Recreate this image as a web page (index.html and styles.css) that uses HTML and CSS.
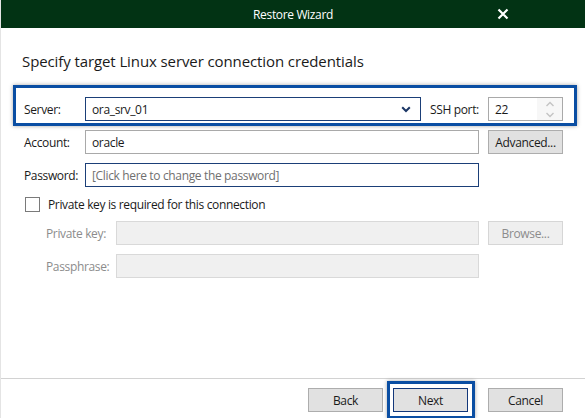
FILE: index.html
```html
<!DOCTYPE html>
<html>
<head>
<meta charset="utf-8">
<link rel="stylesheet" href="styles.css">
</head>
<body>
<div class="window">
  <div class="titlebar">
    <span class="title">Restore Wizard</span>
    <span class="close">
      <svg width="12" height="12" viewBox="0 0 12 12"><path d="M1.5 1.5 L10.5 10.5 M10.5 1.5 L1.5 10.5" stroke="#fff" stroke-width="2.2" fill="none"/></svg>
    </span>
  </div>
  <div class="main">
    <h1 class="heading">Specify target Linux server connection credentials</h1>
    <div class="form">
      <div class="row server-row">
        <span class="mark"></span>
        <span class="label">Server:</span>
        <div class="field combo focus">
          <span class="value">ora_srv_01</span>
          <svg class="chev" width="10" height="7" viewBox="0 0 10 7"><path d="M1.2 1.2 L5 5 L8.8 1.2" stroke="#1c3766" stroke-width="2" fill="none"/></svg>
        </div>
        <span class="label ssh">SSH port:</span>
        <div class="field spin">
          <span class="value">22</span>
          <div class="spin-btns">
            <svg width="10" height="6" viewBox="0 0 10 6"><path d="M1.5 5 L5 1.5 L8.5 5" stroke="#c4c4c4" stroke-width="1.4" fill="none"/></svg>
            <svg width="10" height="6" viewBox="0 0 10 6"><path d="M1.5 1 L5 4.5 L8.5 1" stroke="#c4c4c4" stroke-width="1.4" fill="none"/></svg>
          </div>
        </div>
      </div>
      <div class="row">
        <span class="label">Account:</span>
        <div class="field wide"><span class="value">oracle</span></div>
        <button class="btn side">Advanced...</button>
      </div>
      <div class="row">
        <span class="label">Password:</span>
        <div class="field wide focus"><span class="value placeholder">[Click here to change the password]</span></div>
      </div>
      <div class="row check-row">
        <span class="checkbox"></span>
        <span class="check-label">Private key is required for this connection</span>
      </div>
      <div class="row">
        <span class="label sub disabled">Private key:</span>
        <div class="field narrow off"></div>
        <button class="btn side off">Browse...</button>
      </div>
      <div class="row">
        <span class="label sub disabled">Passphrase:</span>
        <div class="field narrow off"></div>
      </div>
    </div>
  </div>
  <div class="footer">
    <button class="btn">Back</button>
    <div class="next-wrap">
      <span class="mark"></span>
      <button class="btn default">Next</button>
    </div>
    <button class="btn cancel">Cancel</button>
  </div>
</div>
</body>
</html>
```
FILE: styles.css
```css
* { box-sizing: border-box; }
html, body { margin: 0; padding: 0; }
body {
  width: 585px;
  height: 418px;
  overflow: hidden;
  background: #ffffff;
  font-family: "Open Sans", "Noto Sans", sans-serif;
  font-size: 12px;
  letter-spacing: -0.35px;
  color: #1a1a1a;
}
.window {
  width: 585px;
  height: 418px;
  display: flex;
  flex-direction: column;
  border-left: 1px solid #e4e4e4;
}
.titlebar {
  height: 28px;
  flex: none;
  background: #023314;
  color: #ffffff;
  display: flex;
  align-items: center;
  justify-content: center;
  position: relative;
}
.title { font-size: 12px; }
.close {
  position: absolute;
  right: 76px;
  top: 8px;
  width: 12px;
  height: 12px;
  display: flex;
}
.main {
  flex: 1;
  padding: 23px 22px 0 23px;
}
.heading {
  margin: 0 0 26px -2px;
  font-size: 15px;
  font-weight: normal;
  letter-spacing: -0.1px;
  line-height: 20px;
  color: #1a1a1a;
}
.form {
  display: flex;
  flex-direction: column;
  gap: 9px;
}
.row {
  display: flex;
  align-items: center;
  height: 24px;
  position: relative;
}
.mark {
  position: absolute;
  border: 3px solid #0a4ea3;
  box-shadow: 0 0 4px rgba(0, 0, 0, 0.35);
  pointer-events: none;
}
.server-row .mark {
  left: -11px;
  right: -14px;
  top: -12px;
  bottom: -5px;
}
.label {
  width: 61px;
  flex: none;
}
.label.sub {
  margin-left: 22px;
  width: 70px;
}
.disabled { color: #8c8c8c; }
.field {
  height: 24px;
  border: 1px solid #a9a9a9;
  background: #ffffff;
  display: flex;
  align-items: center;
  padding-left: 6px;
  flex: none;
}
.field.focus { border-color: #1b3f78; }
.field.off { background: #f0f0f0; border-color: #d9d9d9; }
.combo {
  width: 336px;
  justify-content: space-between;
  padding-right: 9px;
}
.chev { display: block; }
.ssh { width: auto; margin-left: 9px; }
.spin {
  width: 75px;
  margin-left: auto;
  justify-content: space-between;
  padding-right: 0;
}
.spin-btns {
  width: 25px;
  height: 22px;
  display: flex;
  flex-direction: column;
  align-items: center;
  justify-content: space-around;
  background: #f7f7f7;
}
.spin-btns svg { display: block; }
.wide { width: 394px; }
.narrow { width: 363px; }
.placeholder { color: #707070; }
.btn {
  font-family: inherit;
  font-size: 12px;
  letter-spacing: inherit;
  color: #1a1a1a;
  width: 75px;
  height: 24px;
  border: 1px solid #adadad;
  background: #e1e1e1;
  padding: 0;
  flex: none;
}
.btn.side { margin-left: auto; }
.btn.off { color: #8c8c8c; background: #efefef; border-color: #d6d6d6; }
.check-row { height: 16px; }
.checkbox {
  width: 15px;
  height: 15px;
  border: 1px solid #7a7a7a;
  margin-left: 1px;
  margin-right: 8px;
  background: #fff;
}
.footer {
  flex: none;
  height: 40px;
  border-top: 1px solid #d2d2d2;
  display: flex;
  justify-content: flex-end;
  padding: 9px 22px 0 0;
  gap: 10px;
}
.next-wrap {
  position: relative;
  display: flex;
  height: 24px;
}
.next-wrap .mark {
  left: -6px;
  right: -7px;
  top: -7px;
  bottom: -7px;
}
.btn.default { border-color: #13377a; }
.cancel { margin-left: 10px; }
```
